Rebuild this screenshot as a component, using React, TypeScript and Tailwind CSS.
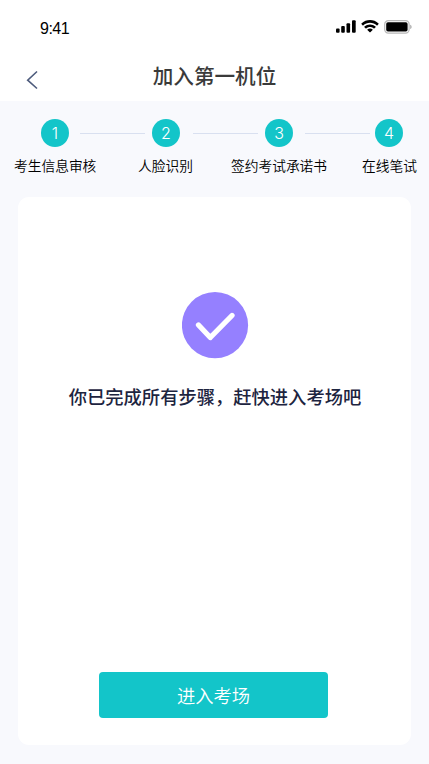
import clsx from 'clsx'

const steps = [
  { number: 1, label: '考生信息审核', line: 'ml-[11px] mr-[7px]', text: 'w-[83px]' },
  { number: 2, label: '人脸识别', line: 'ml-[13px] mr-[7px]', text: 'ml-[41px] w-[55px]' },
  { number: 3, label: '签约考试承诺书', line: 'ml-3 mr-[5px]', text: 'ml-[38px] w-[97px]' },
  { number: 4, label: '在线笔试', line: '', text: 'ml-[34px] w-[55px]' },
]

const StatusBar = () => (
  <div className="flex h-[55px] items-start justify-between pl-10 pr-4">
    <span className="mt-[17px] font-['Liberation_Sans',sans-serif] text-base leading-6 tracking-[-0.5px] text-black">
      9:41
    </span>
    <div className="mt-5 flex h-[13px] items-center">
      <svg width="20" height="13" viewBox="0 0 20 13">
        <rect x="0" y="8.5" width="3.6" height="4.3" rx="1" />
        <rect x="5.2" y="6" width="3.6" height="6.8" rx="1" />
        <rect x="10.5" y="3.3" width="3.6" height="9.5" rx="1" />
        <rect x="16" y="0.2" width="3.7" height="12.6" rx="1" />
      </svg>
      <svg className="ml-[5px]" width="18" height="13" viewBox="0 0 17 12">
        <path d="M8.5 2.4c2.4 0 4.7.9 6.4 2.6.1.1.3.1.5 0l1.2-1.3c.1-.1.1-.4 0-.5-4.5-4.3-11.7-4.3-16.2 0-.1.1-.1.4 0 .5L1.6 5c.2.1.4.1.5 0 1.7-1.7 4-2.6 6.4-2.6Z" />
        <path d="M8.5 6.5c1.3 0 2.6.5 3.5 1.4.2.1.4.1.5 0l1.3-1.3c.1-.1.1-.4 0-.5-3-2.8-7.6-2.8-10.6 0-.1.1-.1.4 0 .5l1.3 1.3c.1.1.3.1.5 0 .9-.9 2.2-1.4 3.5-1.4Z" />
        <path d="M11 9.3c.1-.1.1-.4 0-.5-1.4-1.2-3.6-1.2-5 0-.1.1-.1.4 0 .5l2.2 2.2c.2.2.4.2.6 0L11 9.3Z" />
      </svg>
      <svg className="ml-[5px] mr-px" width="28" height="14" viewBox="0 0 28 14">
        <rect x="0.7" y="0.7" width="24.4" height="12.4" rx="3.6" fill="none" stroke="#b8b8b8" strokeWidth="1.2" />
        <rect x="2.2" y="2.2" width="21.4" height="9.4" rx="1.8" />
        <path d="M26.2 4.7v4.4c.9-.4 1.4-1.2 1.4-2.2s-.5-1.8-1.4-2.2Z" fill="#aaa" />
      </svg>
    </div>
  </div>
)

const Header = () => (
  <header className="h-[101px] bg-white">
    <StatusBar />
    <div className="grid h-[42px] grid-cols-[1fr_auto_1fr] items-center px-[26px]">
      <button className="mt-2 h-5 w-3" aria-label="返回">
        <svg width="12" height="20" viewBox="0 0 12 20" fill="none" stroke="#4d5b7c" strokeWidth="1.6">
          <path d="M11 1.5 1.7 10.2l9.3 8.3" />
        </svg>
      </button>
      <h1 className="-mt-0.5 text-[20.6px] font-medium leading-[30px] text-[#3a3a3a]">加入第一机位</h1>
    </div>
  </header>
)

const Steps = () => (
  <div className="h-24 pt-[18px]">
    <div className="flex items-center pl-[41px]">
      {steps.map(({ number, line }) => (
        <div key={number} className="flex items-center">
          <span className="flex size-7 items-center justify-center rounded-full bg-[#13c5c9] font-['Inter',sans-serif] text-base font-light leading-7 text-white">
            {number}
          </span>
          {line && <span className={clsx('h-px w-[65px] bg-[#d9e0f0]', line)} />}
        </div>
      ))}
    </div>
    <div className="mt-[7px] flex pl-3.5">
      {steps.map(({ number, label, text }) => (
        <span key={number} className={clsx('whitespace-nowrap text-[13.73px] font-[350] leading-[22px] text-black', text)}>
          {label}
        </span>
      ))}
    </div>
  </div>
)

export default function App() {
  return (
    <div className="h-[764px] w-[429px] overflow-hidden bg-[#f8f9fd] font-['Noto_Sans_CJK_SC',sans-serif]">
      <Header />
      <Steps />
      <main className="mx-[18px] flex h-[548px] flex-col items-center rounded-[11px] bg-white pt-[95px]">
        <svg className="ml-px" width="67" height="67" viewBox="0 0 67 67" fill="none">
          <circle cx="33" cy="33.2" r="33.1" fill="#9580ff" />
          <path d="m16.5 33 11.8 12.5L50 23.500" stroke="#fff" strokeWidth="5.3" strokeLinecap="round" strokeLinejoin="round" />
        </svg>
        <p className="mt-[23px] whitespace-nowrap pl-px text-[18.3px] font-medium leading-7 text-[#1d2440]">
          你已完成所有步骤，赶快进入考场吧
        </p>
        <button className="mb-[27px] mr-0.5 mt-auto h-[46px] w-[229px] rounded bg-[#13c5c9] pt-0.5 text-[18.3px] font-[350] text-white">
          进入考场
        </button>
      </main>
    </div>
  )
}
